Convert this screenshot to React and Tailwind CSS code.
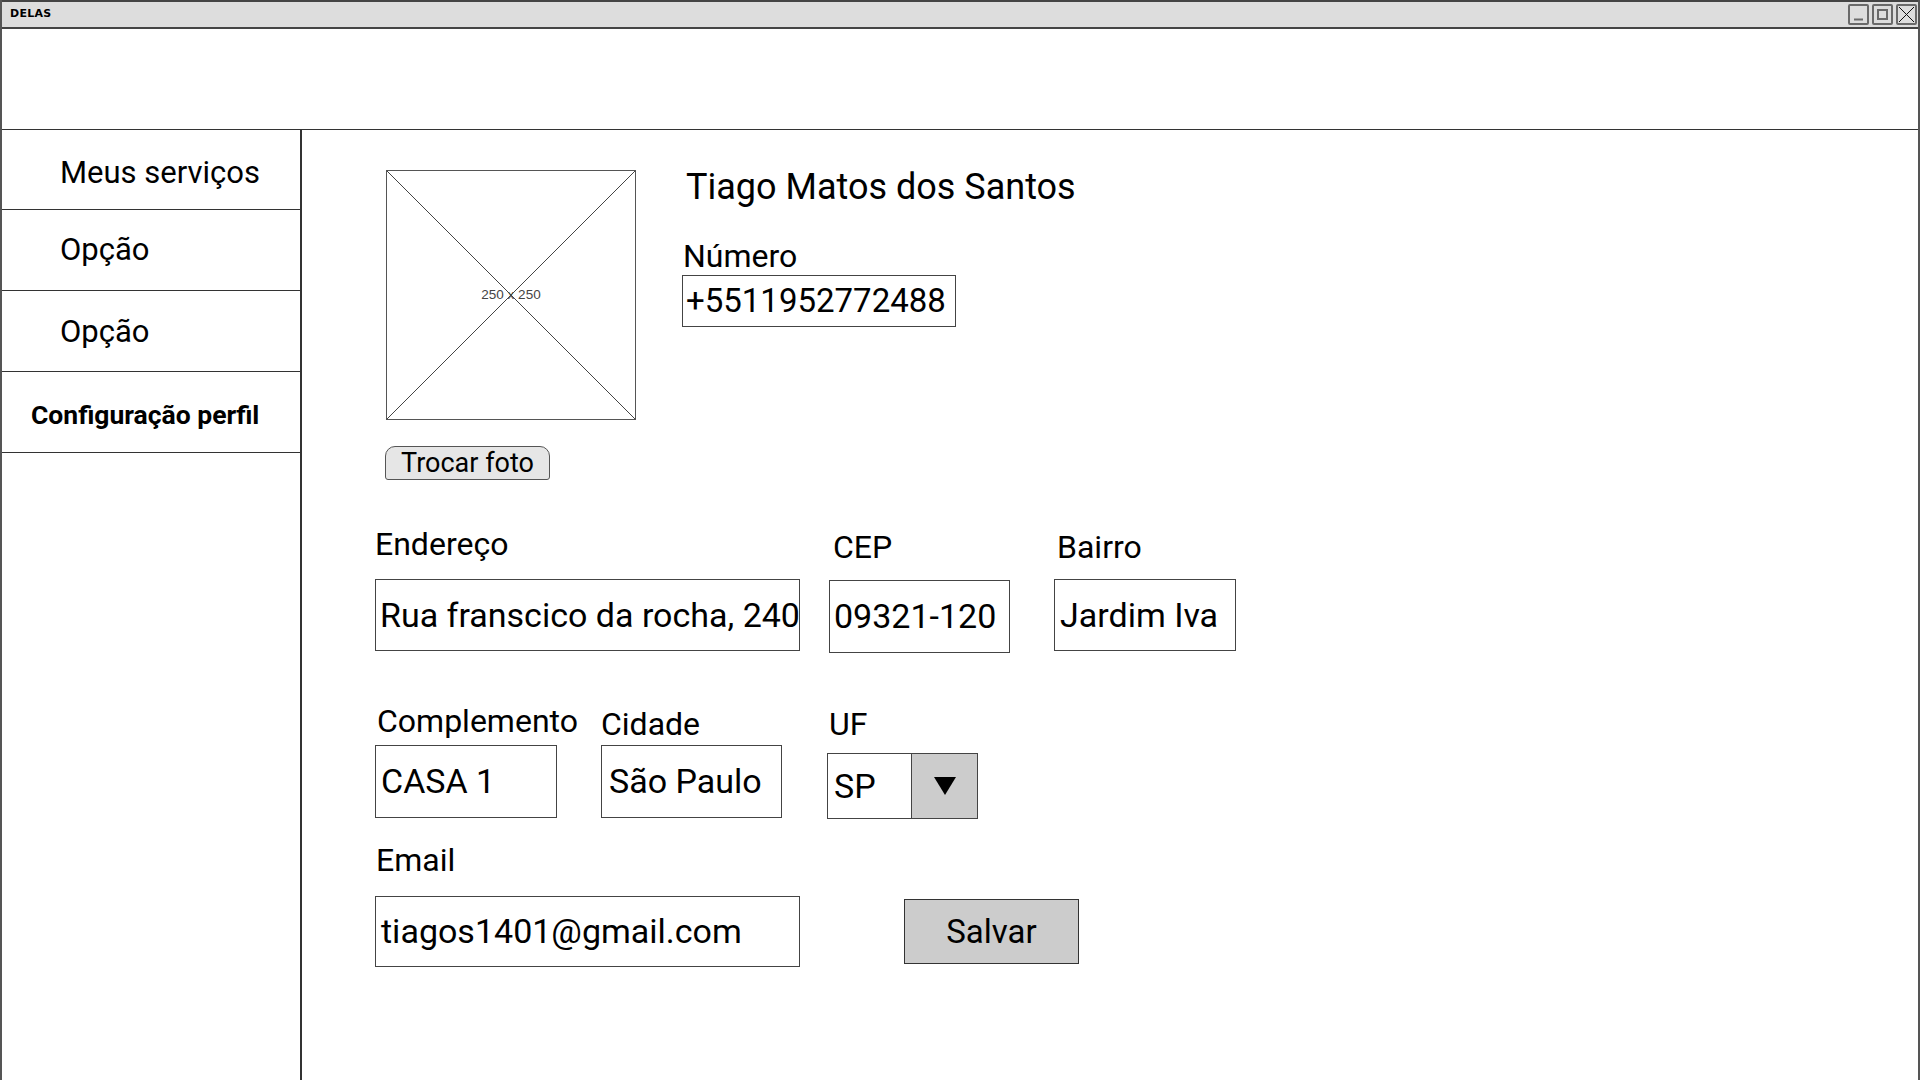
import React from "react";

function WinBtn({ kind }) {
  return (
    <div className="w-[21px] h-[21px] border-2 border-[#6a6a6a] rounded-[2px] bg-[#dddddd] relative">
      <svg width="17" height="17" viewBox="0 0 17 17" className="absolute left-0 top-0">
        {kind === "min" && <line x1="4" y1="13.5" x2="13" y2="13.5" stroke="#6a6a6a" strokeWidth="2" />}
        {kind === "max" && <rect x="4" y="4" width="9" height="9" fill="none" stroke="#6a6a6a" strokeWidth="2" />}
        {kind === "close" && (
          <g stroke="#111" strokeWidth="1">
            <line x1="1" y1="1" x2="16" y2="16" />
            <line x1="16" y1="1" x2="1" y2="16" />
          </g>
        )}
      </svg>
    </div>
  );
}

function SideItem({ children, h, cls }) {
  return (
    <div className={`${h} border-b border-[#333] flex items-center ${cls}`}>{children}</div>
  );
}

function Field({ label, value, w, inputCls, labelCls = "", valueCls = "pl-[5px]" }) {
  return (
    <div className={`${w} flex flex-col shrink-0`}>
      <div className={`h-[38px] leading-[38px] text-[32px] whitespace-nowrap ${labelCls}`}>{label}</div>
      <div className={`${inputCls} border border-[#444] bg-white flex items-center text-[34px] whitespace-nowrap overflow-hidden ${valueCls}`}>
        {value}
      </div>
    </div>
  );
}

export default function App() {
  return (
    <div className="w-[1920px] h-[1080px] overflow-hidden bg-white font-[Roboto,sans-serif] text-black flex flex-col border-l-2 border-r-2 border-[#555]">
      {/* title bar */}
      <div className="h-[29px] shrink-0 bg-[#dddddd] border-t-2 border-b-2 border-[#444] flex items-center justify-between pl-[8px] pr-[1px]">
        <span className="font-['DejaVu_Sans',sans-serif] font-bold text-[11px] tracking-[0.3px]">DELAS</span>
        <div className="flex gap-[3px]">
          <WinBtn kind="min" />
          <WinBtn kind="max" />
          <WinBtn kind="close" />
        </div>
      </div>

      {/* header */}
      <div className="h-[100px] shrink-0" />

      {/* body */}
      <div className="flex-1 flex border-t border-[#333]">
        {/* sidebar */}
        <div className="w-[300px] shrink-0 border-r-2 border-[#333] flex flex-col">
          <SideItem h="h-[80px]" cls="pl-[58px] text-[31px] pt-[8px]">Meus serviços</SideItem>
          <SideItem h="h-[81px]" cls="pl-[58px] text-[31px]">Opção</SideItem>
          <SideItem h="h-[81px]" cls="pl-[58px] text-[31px] pt-[2px]">Opção</SideItem>
          <SideItem h="h-[81px]" cls="pl-[29px] text-[26.5px] font-bold pt-[6px]">Configuração perfil</SideItem>
        </div>

        {/* main */}
        <div className="flex-1 flex flex-col">
          {/* profile top */}
          <div className="flex pt-[40px] pl-[84px]">
            <div className="flex flex-col w-[250px] shrink-0">
              <div className="w-[250px] h-[250px] border border-[#555] relative flex items-center justify-center">
                <svg width="248" height="248" viewBox="0 0 248 248" className="absolute left-0 top-0">
                  <line x1="0" y1="0" x2="248" y2="248" stroke="#444" strokeWidth="1" />
                  <line x1="248" y1="0" x2="0" y2="248" stroke="#444" strokeWidth="1" />
                </svg>
                <span className="relative text-[13.5px] text-[#444] font-['Liberation_Sans',sans-serif] mt-[1px]">250 x 250</span>
              </div>
              <div className="mt-[26px] ml-[-1px] w-[165px] h-[34px] rounded-t-[10px] rounded-b-[3px] bg-[#e6e6e6] border border-[#555] flex items-center justify-center text-[27px] leading-none">
                Trocar foto
              </div>
            </div>
            <div className="ml-[50px] flex flex-col">
              <div className="text-[36px] leading-[42px] mt-[-4px] whitespace-nowrap">Tiago Matos dos Santos</div>
              <div className="text-[32px] leading-[38px] mt-[29px] ml-[-3px]">Número</div>
              <div className="ml-[-4px] w-[274px] h-[52px] border border-[#444] flex items-center pl-[3px] text-[33px] whitespace-nowrap">
                +5511952772488
              </div>
            </div>
          </div>

          {/* form */}
          <div className="flex flex-col pl-[73px] mt-[45px]">
            <div className="flex items-start">
              <Field label="Endereço" value="Rua franscico da rocha, 240" w="w-[425px]" inputCls="mt-[16px] h-[72px]" valueCls="pl-[4px]" />
              <div className="w-[29px] shrink-0" />
              <Field label="CEP" value="09321-120" w="w-[181px]" inputCls="mt-[14px] h-[73px]" labelCls="mt-[3px] pl-[4px]" valueCls="pl-[4px]" />
              <div className="w-[44px] shrink-0" />
              <Field label="Bairro" value="Jardim Iva" w="w-[182px]" inputCls="mt-[13px] h-[72px]" labelCls="mt-[3px] pl-[3px]" valueCls="pl-[5px]" />
            </div>

            <div className="flex items-start mt-[49px]">
              <Field label="Complemento" value="CASA 1" w="w-[182px]" inputCls="mt-[5px] h-[73px]" labelCls="pl-[2px]" valueCls="pl-[5px]" />
              <div className="w-[44px] shrink-0" />
              <Field label="Cidade" value="São Paulo" w="w-[181px]" inputCls="mt-[2px] h-[73px]" labelCls="mt-[3px]" valueCls="pl-[7px]" />
              <div className="w-[45px] shrink-0" />
              <div className="w-[151px] flex flex-col shrink-0">
                <div className="h-[38px] leading-[38px] text-[32px] mt-[3px] pl-[2px]">UF</div>
                <div className="mt-[10px] h-[66px] border border-[#444] flex">
                  <div className="w-[83px] flex items-center pl-[6px] text-[34px]">SP</div>
                  <div className="flex-1 bg-[#cccccc] border-l border-[#444] flex items-center justify-center">
                    <svg width="22" height="18" viewBox="0 0 22 18">
                      <polygon points="0,0 22,0 11,18" fill="#000" />
                    </svg>
                  </div>
                </div>
              </div>
            </div>

            <div className="flex items-start mt-[22px]">
              <Field label="Email" value="tiagos1401@gmail.com" w="w-[425px]" inputCls="mt-[17px] h-[71px]" labelCls="pl-[1px]" valueCls="pl-[5px]" />
              <div className="ml-[104px] mt-[58px] w-[175px] h-[65px] bg-[#cccccc] border border-[#333] flex items-center justify-center text-[33px]">
                Salvar
              </div>
            </div>
          </div>
        </div>
      </div>
    </div>
  );
}
